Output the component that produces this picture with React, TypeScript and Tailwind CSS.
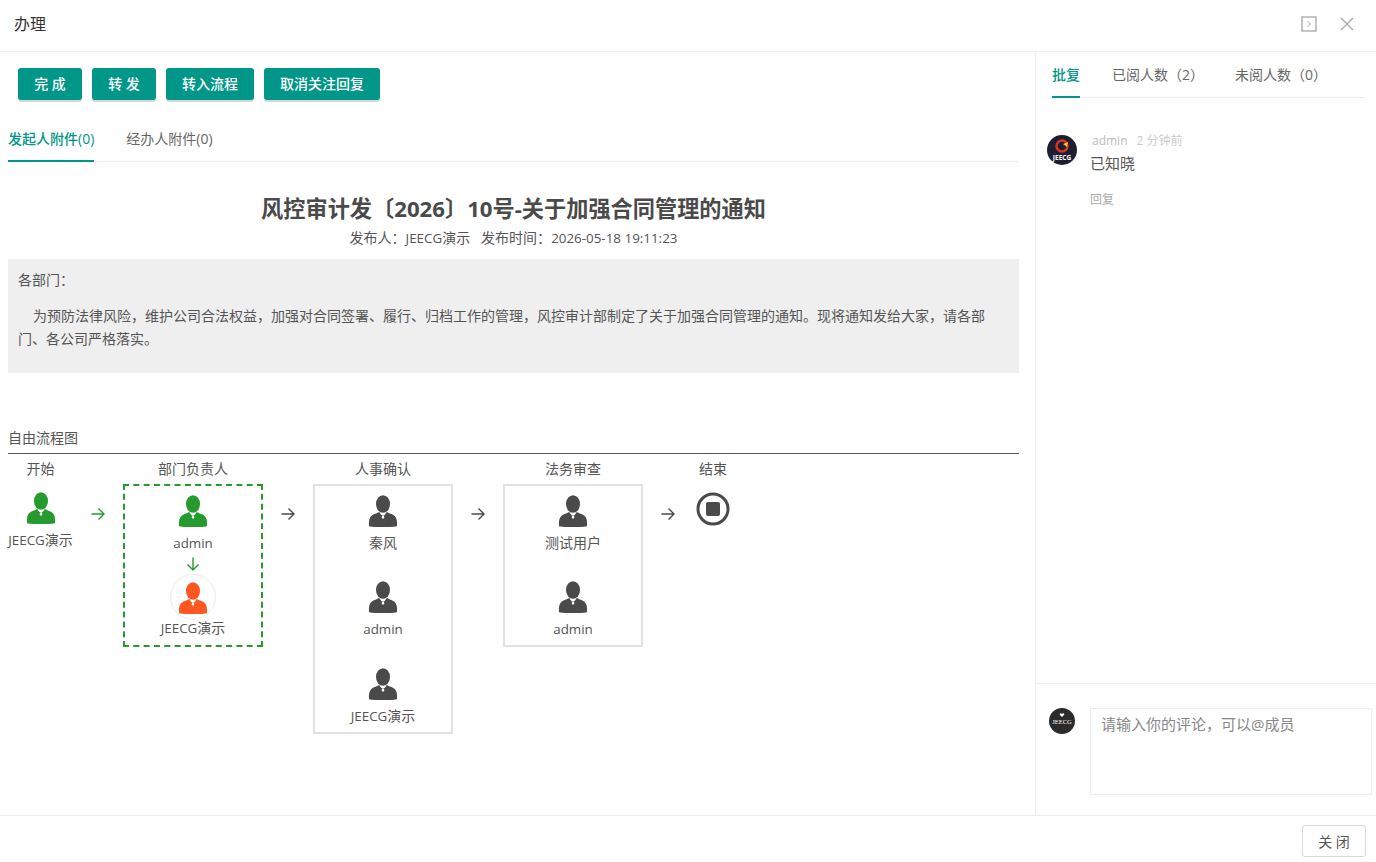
const FONT = "'Open Sans','Noto Sans CJK SC',sans-serif";

function L({ children }: { children: React.ReactNode }) {
  return <span className="text-[13.4px]">{children}</span>;
}

function Person({ color, className = "" }: { color: string; className?: string }) {
  return (
    <svg width="30" height="32" viewBox="0 0 30 32" className={className}>
      <ellipse cx="15" cy="9" rx="7" ry="8.800" fill={color} />
      <path d="M1 31.200c-.4-5 .4-8.800 2.800-10.600 2.800-2 6.200-2.500 7.700-3.800l3.500 3.400 3.500-3.400c1.500 1.300 4.900 1.800 7.700 3.800 2.400 1.800 3.200 5.600 2.800 10.600-4 .8-8.500.8-14 .8s-10 0-14-.8z" fill={color} />
      <path d="M11 16.900l2.600 3.300h2.800l2.600-3.300-4 1.700z" fill="#fff" />
      <path d="M14.200 20.400h1.600l.6 2.200-1.400 1.300-1.400-1.300z" fill="#fff" />
    </svg>
  );
}

function Arrow({ color, down = false }: { color: string; down?: boolean }) {
  return (
    <svg width="16" height="16" viewBox="0 0 16 16" className={down ? "rotate-90" : ""} fill="none" stroke={color} strokeWidth="1.400">
      <path d="M1.500 8h12.500M8.500 2.500L14 8l-5.500 5.500" />
    </svg>
  );
}

function Member({ name, color = "#4a4a4a", gap = "" }: { name: React.ReactNode; color?: string; gap?: string }) {
  return (
    <div className={`flex flex-col items-center ${gap}`}>
      <Person color={color} />
      <div className="mt-[7px] text-[14px] leading-[18px] text-[#555]">{name}</div>
    </div>
  );
}

function Step({ title, children, className, borderClass }: { title: string; children: React.ReactNode; className: string; borderClass: string }) {
  return (
    <div className="flex w-[140px] flex-col items-center">
      <div className="h-[30px] text-[14px] leading-[30px] text-[#555]">{title}</div>
      <div className={`box-border flex w-[140px] flex-col items-center ${borderClass} ${className}`}>{children}</div>
    </div>
  );
}

function FlowArrow({ color = "#4a4a4a" }: { color?: string }) {
  return (
    <div className="flex w-[50px] justify-center pt-[52px]">
      <Arrow color={color} />
    </div>
  );
}

export default function App() {
  return (
    <div className="flex h-[862px] w-[1376px] flex-col overflow-hidden bg-white text-[#555]" style={{ fontFamily: FONT }}>
      <header className="flex h-[52px] shrink-0 items-center justify-between border-b border-[#ececec] pb-1 pl-[14px] pr-[21px]">
        <div className="text-[16px] leading-[24px] text-[#333]">办理</div>
        <div className="flex items-center gap-[22px]">
          <svg width="16" height="16" viewBox="0 0 16 16" fill="none" stroke="#a6a6a6">
            <rect x="1" y="1" width="14" height="14" strokeWidth="1.300" />
            <path d="M6.500 5l3 3-3 3" strokeWidth="1" />
          </svg>
          <svg width="16" height="16" viewBox="0 0 16 16" fill="none" stroke="#a6a6a6" strokeWidth="1.300">
            <path d="M2 2l12 12M14 2L2 14" />
          </svg>
        </div>
      </header>

      <div className="flex min-h-0 flex-1">
        <main className="w-[1036px] shrink-0 border-r border-[#ececec] pl-2 pr-4">
          <div className="flex gap-[10px] pl-[10px] pt-4">
            {["完 成", "转 发", "转入流程", "取消关注回复"].map((t, i) => (
              <button
                key={t}
                className={`h-8 rounded-[3px] bg-[#009688] pb-[2px] text-[14px] font-medium text-white shadow-[0_2px_1px_#cfd8d6] ${["w-16", "w-16", "w-[88px]", "w-[116px]"][i]}`}
              >
                {t}
              </button>
            ))}
          </div>

          <div className="mt-[19px] flex h-[43px] gap-8 border-b border-[#ececec] text-[14px] leading-[40px]">
            <div className="h-[43px] border-b-2 border-[#009688] font-medium text-[#009688]">发起人附件(0)</div>
            <div className="text-[#666]">经办人附件(0)</div>
          </div>

          <h1 className="mt-[29px] text-center text-[22.2px] font-bold leading-[36px] text-[#4a4a4a]">风控审计发〔2026〕10号-关于加强合同管理的通知</h1>
          <div className="mt-[2px] text-center text-[14px] leading-[18px] text-[#555]">发布人：<L>JEECG</L>演示&nbsp;&nbsp;&nbsp;发布时间：<L>2026-05-18 19:11:23</L></div>

          <div className="mt-3 h-[114px] bg-[#efefef] pl-[10px] pr-[30px] pt-[9px] text-[14px] leading-[23px] text-[#555]">
            <p>各部门：</p>
            <p className="mt-[13px] indent-[15px]">为预防法律风险，维护公司合法权益，加强对合同签署、履行、归档工作的管理，风控审计部制定了关于加强合同管理的通知。现将通知发给大家，请各部门、各公司严格落实。</p>
          </div>

          <div className="mt-[55px] h-[26px] border-b border-[#555] text-[14px] leading-[20px] text-[#555]">自由流程图</div>

          <div className="flex items-start">
            <div className="flex w-[65px] flex-col items-center">
              <div className="h-[30px] text-[14px] leading-[30px]">开始</div>
              <div className="pt-[8px]"><Person color="#259b2f" /></div>
              <div className="mt-[7px] whitespace-nowrap text-[14px] leading-[18px]"><L>JEECG</L>演示</div>
            </div>
            <FlowArrow color="#259b2f" />
            <Step title="部门负责人" borderClass="border-2 border-dashed border-[#259b2f]" className="h-[163px] pt-[9px]">
              <Person color="#259b2f" />
              <div className="mt-[7px] text-[14px] leading-[18px]"><L>admin</L></div>
              <div className="mt-[4px] flex"><Arrow color="#259b2f" down /></div>
              <div className="mt-[2px] flex h-[46px] w-[46px] items-center justify-center rounded-full border border-[#e6efe6]">
                <Person color="#ff5722" className="mt-[2px]" />
              </div>
              <div className="-mt-[1px] text-[14px] leading-[18px]"><L>JEECG</L>演示</div>
            </Step>
            <FlowArrow />
            <Step title="人事确认" borderClass="border-2 border-[#e2e2e2]" className="h-[250px] pt-[9px]">
              <Member name="秦风" />
              <Member name={<L>admin</L>} gap="mt-[29px]" />
              <Member name={<><L>JEECG</L>演示</>} gap="mt-[30px]" />
            </Step>
            <FlowArrow />
            <Step title="法务审查" borderClass="border-2 border-[#e2e2e2]" className="h-[163px] pt-[9px]">
              <Member name="测试用户" />
              <Member name={<L>admin</L>} gap="mt-[29px]" />
            </Step>
            <FlowArrow />
            <div className="flex w-[40px] flex-col items-center">
              <div className="h-[30px] text-[14px] leading-[30px]">结束</div>
              <svg width="34" height="34" viewBox="0 0 34 34" className="mt-[8px]">
                <circle cx="17" cy="17" r="15" fill="none" stroke="#4a4a4a" strokeWidth="3" />
                <rect x="10" y="10" width="14" height="14" rx="2" fill="#4a4a4a" />
              </svg>
            </div>
          </div>
        </main>

        <aside className="flex min-w-0 flex-1 flex-col">
          <div className="flex-1 pl-[16px] pr-[10px]">
            <div className="flex h-[46px] border-b border-[#ececec] text-[14px] leading-[46px]">
              <div className="h-[46px] border-b-2 border-[#009688] font-medium text-[#009688]">批复</div>
              <div className="ml-8 text-[#666]">已阅人数（2）</div>
              <div className="ml-[31px] text-[#666]">未阅人数（0）</div>
            </div>
            <div className="mt-[37px] flex">
              <svg width="30" height="30" viewBox="0 0 30 30" className="-ml-[5px] shrink-0" role="img">
                <circle cx="15" cy="15" r="15" fill="#1e1e33" />
                <circle cx="15" cy="11" r="5.500" fill="none" stroke="#d8341f" strokeWidth="2.500" />
                <path d="M16 9l5-2-1 5z" fill="#f4c21d" />
                <text x="15" y="25" textAnchor="middle" fontSize="6.500" fill="#fff" fontWeight="700">JEECG</text>
              </svg>
              <div className="ml-[13px] min-w-0">
                <div className="pl-[2px] text-[12px] leading-[12px] text-[#bbb]">
                  admin<span className="ml-[9px] text-[#ccc]">2 分钟前</span>
                </div>
                <div className="mt-[4px] text-[15px] leading-[24px] text-[#555]">已知晓</div>
                <div className="mt-[16px] text-[12px] leading-[18px] text-[#aaa]">回复</div>
              </div>
            </div>
          </div>
          <div className="flex h-[132px] shrink-0 border-t border-[#ececec] pl-[13px] pr-[4px] pt-[24px]">
            <svg width="26" height="26" viewBox="0 0 26 26" className="shrink-0" role="img">
              <circle cx="13" cy="13" r="13" fill="#2b2b2b" />
              <path d="M13 9l-2.500-2.500 1.200-1.500 1.300 1 1.300-1 1.200 1.500z" fill="#fff" />
              <text x="13" y="16" textAnchor="middle" fontSize="6.500" fill="#fff" fontFamily="'Liberation Serif',serif">JEECG</text>
            </svg>
            <div className="ml-[15px] h-[87px] flex-1 border border-[#ececec] px-[10px] py-[3px] text-[15px] leading-[24px] text-[#888]">请输入你的评论，可以@成员</div>
          </div>
        </aside>
      </div>

      <footer className="flex h-[47px] shrink-0 items-start justify-end border-t border-[#ececec] pr-[10px] pt-[9px]">
        <button className="h-8 w-16 rounded-[3px] border border-[#d9d9d9] bg-white text-[14px] text-[#555]">关 闭</button>
      </footer>
    </div>
  );
}
